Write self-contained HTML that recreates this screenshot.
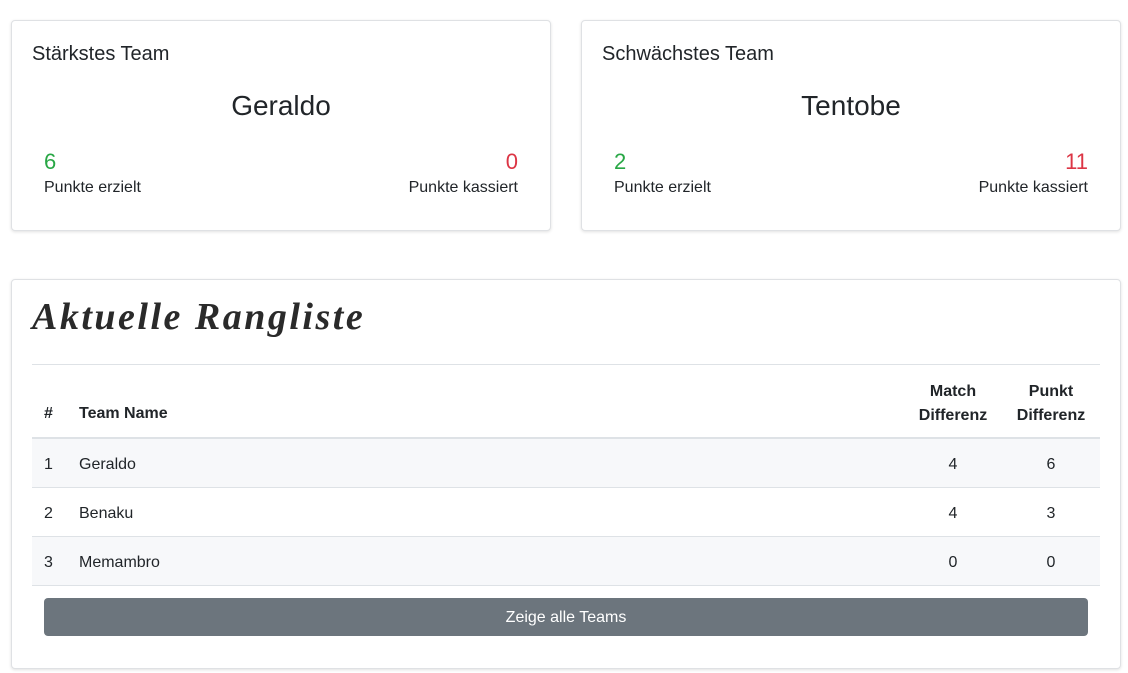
<!DOCTYPE html>
<html><head><meta charset="utf-8"><style>
body{margin:0;width:1128px;height:673px;background:#fff;font-family:"Liberation Sans",sans-serif;color:#212529;position:relative;overflow:hidden}
.card{position:absolute;background:#fff;border:1px solid #dfe1e4;border-radius:4px;box-shadow:0 1px 3px rgba(0,0,0,.12)}
.a{position:absolute;white-space:nowrap}
.g{color:#28a745}.r{color:#dc3545}
.row{position:absolute;left:20px;width:1068px;height:48px;border-bottom:1px solid #dee2e6;font-size:16px}
.row span{position:absolute;top:17px}
.s{background:#f7f8fa}
</style></head><body>
<div class="card" style="left:11px;top:20px;width:538px;height:209px">
 <div class="a" style="left:20px;top:22px;font-size:20px">Stärkstes Team</div>
 <div class="a" style="left:0;width:538px;text-align:center;top:69px;font-size:28px">Geraldo</div>
 <div class="a g" style="left:32px;top:128px;font-size:22px">6</div>
 <div class="a r" style="right:32px;top:128px;font-size:22px">0</div>
 <div class="a" style="left:32px;top:158px;font-size:16px">Punkte erzielt</div>
 <div class="a" style="right:32px;top:158px;font-size:16px">Punkte kassiert</div>
</div>
<div class="card" style="left:581px;top:20px;width:538px;height:209px">
 <div class="a" style="left:20px;top:22px;font-size:20px">Schwächstes Team</div>
 <div class="a" style="left:0;width:538px;text-align:center;top:69px;font-size:28px">Tentobe</div>
 <div class="a g" style="left:32px;top:128px;font-size:22px">2</div>
 <div class="a r" style="right:32px;top:128px;font-size:22px">11</div>
 <div class="a" style="left:32px;top:158px;font-size:16px">Punkte erzielt</div>
 <div class="a" style="right:32px;top:158px;font-size:16px">Punkte kassiert</div>
</div>
<div class="card" style="left:11px;top:279px;width:1108px;height:388px">
 <div class="a" style="left:20px;top:15px;font-size:38px;font-family:'Liberation Serif',serif;font-weight:bold;font-style:italic;letter-spacing:2.5px;color:#2a2a2a">Aktuelle Rangliste</div>
 <div class="a" style="left:20px;top:84px;width:1068px;height:1px;background:#dee2e6"></div>
 <div class="a" style="left:32px;top:125px;font-size:16px;font-weight:bold">#</div>
 <div class="a" style="left:67px;top:125px;font-size:16px;font-weight:bold">Team Name</div>
 <div class="a" style="left:900px;width:82px;text-align:center;top:100px;font-size:16px;font-weight:bold;line-height:24px;white-space:normal">Match Differenz</div>
 <div class="a" style="left:998px;width:82px;text-align:center;top:100px;font-size:16px;font-weight:bold;line-height:24px;white-space:normal">Punkt Differenz</div>
 <div class="a" style="left:20px;top:157px;width:1068px;height:2px;background:#dee2e6"></div>
 <div class="row s" style="top:159px"><span style="left:12px">1</span><span style="left:47px">Geraldo</span><span style="left:880px;width:82px;text-align:center">4</span><span style="left:978px;width:82px;text-align:center">6</span></div>
 <div class="row" style="top:208px"><span style="left:12px">2</span><span style="left:47px">Benaku</span><span style="left:880px;width:82px;text-align:center">4</span><span style="left:978px;width:82px;text-align:center">3</span></div>
 <div class="row s" style="top:257px"><span style="left:12px">3</span><span style="left:47px">Memambro</span><span style="left:880px;width:82px;text-align:center">0</span><span style="left:978px;width:82px;text-align:center">0</span></div>
 <div class="a" style="left:32px;top:318px;width:1044px;height:38px;background:#6c757d;border-radius:4px;color:#fff;text-align:center;line-height:40px;font-size:16px">Zeige alle Teams</div>
</div>
</body></html>
